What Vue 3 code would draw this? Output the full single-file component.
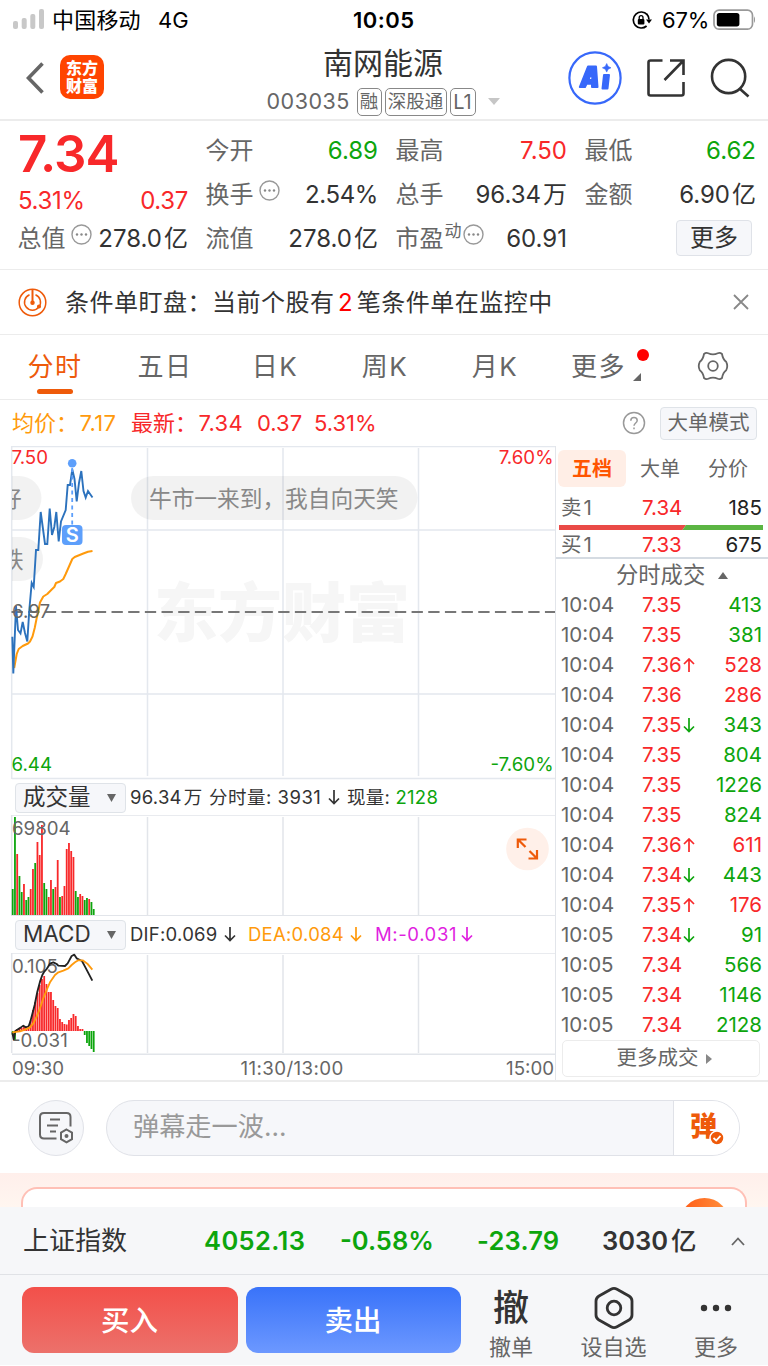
<template>
  <div class="page">
    <div class="status-bar">
      <svg class="signal" width="32" height="20" viewBox="0 0 32 20">
        <rect x="0" y="12" width="5" height="8" rx="2" />
        <rect x="8.7" y="9" width="5" height="11" rx="2" />
        <rect x="17.3" y="5" width="5" height="15" rx="2" />
        <rect x="26" y="0" width="5" height="20" rx="2" />
      </svg>
      <span class="carrier">中国移动</span>
      <span class="net">4G</span>
      <span class="clock">10:05</span>
      <svg class="lock" width="20" height="18" viewBox="0 0 20 18" fill="none" stroke="#000" stroke-width="1.7">
        <path d="M15.2 3.6A8 8 0 1 0 14.6 15" />
        <path d="M14.8 3.2A8 8 0 0 1 17 8.6" />
        <path d="M14 8.4h6l-3 4z" fill="#000" stroke="none" />
        <rect x="5.8" y="8" width="6.6" height="5.4" rx="1" fill="#000" stroke="none" />
        <path d="M7.2 8.4V6.6a1.9 1.9 0 0 1 3.8 0v1.8" stroke-width="1.3" />
      </svg>
      <span class="percent">67%</span>
      <svg class="battery" width="42" height="22" viewBox="0 0 42 22">
        <rect x="1" y="1.2" width="38.5" height="19" rx="5" fill="none" stroke="#999" stroke-width="1.7" />
        <rect x="3.8" y="4" width="22.6" height="13.4" rx="2.6" />
        <path d="M41 7.5c1.2.8 1.6 5.2 0 6.4z" fill="#999" />
      </svg>
    </div>

    <header class="header">
      <svg class="back" width="18" height="32" viewBox="0 0 18 32"><path d="M16.5 1.5L2.5 16L16.5 30.5" fill="none" stroke="#666" stroke-width="3.6" /></svg>
      <div class="logo"><span>东方</span><span>财富</span></div>
      <div class="title">
        <h1>南网能源</h1>
        <div class="code">
          <span class="code-num">003035</span>
          <i class="tag t1">融</i><i class="tag t2">深股通</i><i class="tag t3">L1</i>
          <svg width="12" height="7" viewBox="0 0 12 7"><path d="M0 0h12L6 7z" fill="#c6c6c6" /></svg>
        </div>
      </div>
      <div class="header-icons">
        <svg width="54" height="54" viewBox="0 0 54 54">
          <circle cx="27" cy="27" r="25.6" fill="none" stroke="#3768fa" stroke-width="2.2" />
          <path d="M11.8 36L20 15.5H28L29.5 36H24V32.8H18.500L17 36Z M20.3 29H24.3L24 20.500Z" fill="#3768fa" fill-rule="evenodd" stroke="#3768fa" stroke-width="2" stroke-linejoin="round" />
          <path d="M36 24H41L39.500 37.500H34.500Z" fill="#3768fa" stroke="#3768fa" stroke-width="2" stroke-linejoin="round" />
          <path d="M38.700 12.500l1.400 2.900 2.900 1.400-2.900 1.400-1.400 2.900-1.400-2.900-2.900-1.400 2.900-1.400z" fill="#3768fa" stroke="#3768fa" stroke-width=".6" />
        </svg>
        <svg class="share" width="40" height="40" viewBox="0 0 40 40" fill="none" stroke="#333" stroke-width="2.6">
          <path d="M16.500 2.500H4.500Q2.500 2.500 2.500 4.500V35.500Q2.500 37.500 4.500 37.500H35.500Q37.500 37.500 37.500 35.500V24" />
          <path d="M24 2.500H37.500V17M37.500 2.500L18.500 22" />
        </svg>
        <svg class="search" width="40" height="40" viewBox="0 0 40 40" fill="none" stroke="#333" stroke-width="2.6">
          <circle cx="18.600" cy="18.500" r="16.600" /><path d="M29.500 30.500L38.500 38.500" />
        </svg>
      </div>
    </header>

    <section class="quote">
      <div class="col">
        <div class="big red">7.34</div>
        <div class="cell change red"><span class="tight-num">5.31%</span><span class="tight-num">0.37</span></div>
        <div class="cell"><label>总值</label><more-dot /><b>278.0<em>亿</em></b></div>
      </div>
      <div class="col">
        <div class="cell"><label>今开</label><b class="green">6.89</b></div>
        <div class="cell"><label>换手</label><more-dot /><b class="tight-num">2.54%</b></div>
        <div class="cell"><label>流值</label><b>278.0<em>亿</em></b></div>
      </div>
      <div class="col">
        <div class="cell"><label>最高</label><b class="red">7.50</b></div>
        <div class="cell"><label>总手</label><b>96.34<em>万</em></b></div>
        <div class="cell"><label>市盈</label><sup>动</sup><more-dot class="tight" /><b>60.91</b></div>
      </div>
      <div class="col">
        <div class="cell"><label>最低</label><b class="green">6.62</b></div>
        <div class="cell"><label>金额</label><b>6.90<em>亿</em></b></div>
        <div class="cell"><button class="more-btn">更多</button></div>
      </div>
    </section>

    <div class="notice">
      <svg width="29" height="29" viewBox="0 0 29 29" fill="none" stroke="#ee5a0a" stroke-width="1.500">
        <circle cx="14.500" cy="14.500" r="13.300" />
        <path d="M11.500 6.800A8 8 0 1 0 17.500 6.800" />
        <path d="M14.500 1.500V14" stroke-width="2" /><circle cx="14.500" cy="14.800" r="1.500" fill="#ee5a0a" />
        <circle cx="21" cy="18.500" r="1.300" fill="#ee5a0a" />
      </svg>
      <p>条件单盯盘：当前个股有<b>2</b>笔条件单在监控中</p>
      <svg class="close" width="16" height="16" viewBox="0 0 16 16"><path d="M1 1L15 15M15 1L1 15" stroke="#888" stroke-width="1.800" /></svg>
    </div>

    <nav class="tabs">
      <span v-for="t in tabs" :key="t" :class="{ active: t === '分时' }">{{ t }}</span>
      <span class="tab-more">更多<i class="dot"></i>
        <svg width="8" height="8" viewBox="0 0 8 8"><path d="M8 0V8H0z" fill="#666" /></svg>
      </span>
      <svg class="gear" width="32" height="30" viewBox="-16 -15 32 30" fill="none" stroke="#666" stroke-width="1.800">
        <path d="M-9 -12Q-7 -13.800 -4.800 -12.800Q0 -10.600 4.800 -12.800Q7 -13.800 9 -12Q10 -6.300 13.200 -4.200Q15.300 0 13.200 4.200Q10 6.300 9 12Q7 13.800 4.800 12.800Q0 10.600 -4.800 12.800Q-7 13.800 -9 12Q-10 6.300 -13.200 4.200Q-15.300 0 -13.200 -4.200Q-10 -6.300 -9 -12Z" stroke-linejoin="round" />
        <circle r="4.800" />
      </svg>
    </nav>

    <div class="info-line">
      <span class="orange avg">均价：<u>7.17</u></span>
      <span class="red latest">最新：<u>7.34</u></span>
      <span class="red n1">0.37</span>
      <span class="red n2">5.31%</span>
      <svg class="help" width="24" height="24" viewBox="0 0 24 24" fill="none" stroke="#999" stroke-width="1.500">
        <circle cx="12" cy="12" r="10.500" />
        <path d="M8.800 9.700C8.800 5.400 15.200 5.600 15.200 9.500C15.200 12 12 12 12 14.800" /><path d="M12 16.500V18.300" />
      </svg>
      <button class="mode-btn">大单模式</button>
    </div>

    <main class="market">
      <div class="charts">
        <svg class="price-chart" width="555" height="334" viewBox="0 446 555 334">
          <text x="154" y="636" class="watermark">东方财富</text>
          <g stroke="#e4e8ee" stroke-width="1.500" fill="none">
            <path d="M12 446.500H555M11.700 446V779M12 530H555M12 694H555M12 778.500H555" />
            <path d="M147.500 448V776M283 448V776M418.500 448V776" />
          </g>
          <clipPath id="plot"><rect x="12" y="446" width="543" height="334" /></clipPath>
          <g clip-path="url(#plot)" class="bullets">
            <rect x="131" y="476" width="286.500" height="44" rx="22" />
            <text x="149" y="507">牛市一来到，我自向天笑</text>
            <rect x="-40" y="476" width="81.500" height="44" rx="22" />
            <text x="-1" y="507">好</text>
            <rect x="-40" y="537" width="83" height="44" rx="22" />
            <text x="1" y="568">跌</text>
          </g>
          <path d="M11.500 612H555" stroke="#777" stroke-width="2" stroke-dasharray="11.300 5.370" />
          <polyline :points="avgLine" fill="none" stroke="#ff9a0c" stroke-width="2" stroke-linejoin="round" />
          <polyline :points="priceLine" fill="none" stroke="#2c72bd" stroke-width="1.900" />
          <path d="M72.200 468V525" stroke="#5d9ffb" stroke-width="1.800" stroke-dasharray="4 3.500" />
          <circle cx="72.200" cy="463.300" r="4.300" fill="#5d9ffb" />
          <rect x="62" y="525" width="20.500" height="20" rx="4" fill="#5d9ffb" />
          <text x="72.200" y="542" class="s-mark">S</text>
          <g class="axis">
            <text x="11.500" y="464" fill="#f8282a">7.50</text>
            <text x="553.500" y="464" fill="#f8282a" text-anchor="end">7.60%</text>
            <text x="12" y="618" fill="#666">6.97</text>
            <text x="11.500" y="771" fill="#0da50d">6.44</text>
            <text x="553.500" y="771" fill="#0da50d" text-anchor="end">-7.60%</text>
          </g>
        </svg>

        <div class="indicator">
          <span class="select">成交量<svg width="9" height="8" viewBox="0 0 9 8"><path d="M0 0h9L4.500 8z" fill="#666" /></svg></span>
          <span class="v1">96.34<em>万</em></span>
          <span class="v2">分时量: 3931</span>
          <arrow-icon dir="down" class="a1" />
          <span class="v3">现量: <b class="green">2128</b></span>
        </div>

        <svg class="sub-chart" width="555" height="101" viewBox="0 815 555 101">
          <g class="grid">
            <path d="M12 815H555M11.700 815V916M12 915.800H555" />
            <path d="M147.500 817V915M283 817V915M418.500 817V915" />
          </g>
          <rect v-for="(v, i) in volumes" :key="i" :x="11.800 + i * 2.250" :y="915 - Math.abs(v)" width="1.800" :height="Math.abs(v)" :fill="v > 0 ? '#f8282a' : '#0da50d'" />
          <text x="12" y="835" class="axis" fill="#666">69804</text>
          <circle cx="527.500" cy="849" r="21.300" fill="#fff0e9" />
          <path d="M517.800 848V839.500H526.500M518 839.500L525.500 847M537 850V858.500H528.500M537 858.500L529.500 851" fill="none" stroke="#ee5a0a" stroke-width="2.200" />
        </svg>

        <div class="indicator macd">
          <span class="select">MACD<svg width="9" height="8" viewBox="0 0 9 8"><path d="M0 0h9L4.500 8z" fill="#666" /></svg></span>
          <span class="m1">DIF:0.069</span><arrow-icon dir="down" />
          <span class="m2 orange">DEA:0.084</span><arrow-icon dir="down" class="orange" />
          <span class="m3 purple">M:-0.031</span><arrow-icon dir="down" class="purple" />
        </div>

        <svg class="sub-chart" width="555" height="102" viewBox="0 953 555 102">
          <g class="grid">
            <path d="M12 953H555M11.700 953V1053" />
            <path d="M12 1054.500H555" stroke-width="1.800" />
            <path d="M147.500 955V1053M283 955V1053M418.500 955V1053" />
          </g>
          <rect v-for="(v, i) in macdBars" :key="i" :x="11.800 + i * 2.250" :y="v > 0 ? 1031 - v : 1031" width="1.800" :height="Math.abs(v)" :fill="v > 0 ? '#f8282a' : '#0da50d'" />
          <g class="axis" fill="#666">
            <text x="12" y="973">0.105</text>
            <text x="12" y="1047">-0.031</text>
          </g>
          <g transform="translate(0 775) scale(.3333)" fill="none" stroke-width="5.500" stroke-linejoin="round">
            <polyline :points="difLine" stroke="#222" />
            <polyline :points="deaLine" stroke="#ff9a0c" />
          </g>
        </svg>

        <div class="times"><span>09:30</span><span class="mid">11:30/13:00</span><span>15:00</span></div>
      </div>

      <aside class="side">
        <div class="side-tabs"><span class="on">五档</span><span>大单</span><span>分价</span></div>
        <div class="level"><label>卖<i>1</i></label><span class="red">7.34</span><b>185</b></div>
        <svg class="ratio" width="204" height="5" viewBox="0 0 204 5">
          <path d="M0 0H127L123.500 5H0z" fill="#ea4a47" /><path d="M127 0H204V5H123.500z" fill="#5bb543" />
        </svg>
        <div class="level buy"><label>买<i>1</i></label><span class="red">7.33</span><b>675</b></div>
        <div class="deal-title">分时成交<svg width="10" height="7" viewBox="0 0 10 7"><path d="M0 7h10L5 0z" fill="#666" /></svg></div>
        <div v-for="(d, i) in deals" :key="i" class="deal">
          <span class="time">{{ d[0] }}</span>
          <span class="red price">{{ d[1] }}</span>
          <arrow-icon v-if="d[3]" :dir="d[3]" :class="d[3] === 'up' ? 'red' : 'green'" />
          <span class="vol" :class="d[4]">{{ d[2] }}</span>
        </div>
        <button class="deal-more">更多成交<svg width="6" height="10" viewBox="0 0 6 10"><path d="M0 0v10L6 5z" fill="#888" /></svg></button>
      </aside>
    </main>

    <div class="danmu">
      <div class="danmu-set">
        <svg width="36" height="34" viewBox="0 0 36 34" fill="none" stroke="#666" stroke-width="2">
          <path d="M18.500 27.500H6Q2 27.500 2 23.500V6Q2 2 6 2H28.500Q32.500 2 32.500 6V15.500" />
          <path d="M12 8.500H22M9 14.500H20M12 20.500H18" />
          <path d="M28.500 18.500L34 21.700V28.100L28.500 31.300L23 28.100V21.700Z" /><circle cx="28.500" cy="24.900" r="1" fill="#666" />
        </svg>
      </div>
      <div class="danmu-input">
        <span>弹幕走一波...</span>
        <div class="danmu-toggle">
          <span>弹</span>
          <svg width="16" height="16" viewBox="0 0 16 16"><circle cx="8" cy="8" r="7" fill="#ee5a0a" stroke="#fff" stroke-width="1.500" /><path d="M4.500 8L7.200 10.500L11.500 5.800" fill="none" stroke="#fff" stroke-width="1.800" /></svg>
        </div>
      </div>
    </div>

    <div class="promo"><div class="promo-card"><i></i></div></div>

    <div class="index-bar">
      <span class="name">上证指数</span>
      <b class="green i1">4052.13</b>
      <b class="green i2">-0.58%</b>
      <b class="green i3">-23.79</b>
      <b class="i4">3030<em>亿</em></b>
      <svg width="14" height="9" viewBox="0 0 14 9"><path d="M1 8L7 1.500L13 8" fill="none" stroke="#666" stroke-width="1.800" /></svg>
    </div>

    <footer class="actions">
      <button class="trade buy-btn">买入</button>
      <button class="trade sell-btn">卖出</button>
      <div class="act"><span class="act-icon che">撤</span><span>撤单</span></div>
      <div class="act wide">
        <svg class="act-icon" width="42" height="44" viewBox="0 0 42 44" fill="none" stroke="#333" stroke-width="2.800">
          <path d="M18 3.200Q21 1.500 24 3.200L36 10Q39 11.800 39 15V29Q39 32.200 36 34L24 40.800Q21 42.500 18 40.800L6 34Q3 32.200 3 29V15Q3 11.800 6 10Z" />
          <circle cx="21" cy="22" r="6.800" />
        </svg>
        <span>设自选</span>
      </div>
      <div class="act">
        <svg class="act-icon" width="32" height="44" viewBox="0 0 32 44" fill="#333"><circle cx="4" cy="22" r="3.200" /><circle cx="16" cy="22" r="3.200" /><circle cx="28" cy="22" r="3.200" /></svg>
        <span>更多</span>
      </div>
    </footer>
  </div>
</template>

<script setup>
import { h } from 'vue'

// кружок с тремя точками рядом с подписью
const MoreDot = () => h('svg', { class: 'more-dot', width: 21, height: 21, viewBox: '0 0 21 21' }, [
  h('circle', { cx: 10.5, cy: 10.5, r: 9.5, fill: 'none', stroke: '#999', 'stroke-width': 1.4 }),
  ...[6, 10.5, 15].map(x => h('circle', { cx: x, cy: 10.5, r: 1.2, fill: '#888' }))
])

// стрелка вверх / вниз
const ArrowIcon = (props) => h('svg', { width: 12, height: 15, viewBox: '0 0 12 15' }, [
  h('path', {
    d: props.dir === 'up' ? 'M6 14V1M1 6L6 1L11 6' : 'M6 0V13.500M1 8.500L6 13.500L11 8.500',
    fill: 'none',
    stroke: 'currentColor',
    'stroke-width': 1.7
  })
])
ArrowIcon.props = ['dir']

const tabs = ['分时', '五日', '日K', '周K', '月K']

const priceLine = '12.3,636.7 13.3,673.5 16,606 18,630 20.5,633.5 22.7,622 25,633 27.3,641.5 29.3,610 31.7,583 33.7,587 36,550 38.3,550 40.7,512 45,544 47.3,544 49.7,508.5 52,535 54.3,527 56.3,512 58.7,541.5 61,521.5 65.7,510 67.7,485 70,485 72.3,469.5 74.5,479 76.7,501.5 79,483 81.3,471 83.5,491 85.7,497.5 88,491 92.5,497.5'
const avgLine = '14.2,668 16.7,654 18.7,649 22.7,646 28,643.5 30,641.5 32.5,636.5 34.7,628 36.7,618 38.3,611.5 40,602.5 43.3,596.5 47.3,594 51.7,589.5 54.3,587 56,583 60,581.5 63.3,579 65.7,574 72.3,559 74.7,557 83.3,553.5 88,551.7 92.5,551'

// положительные - красные, отрицательные - зелёные
const volumes = [-26, -98, 61, -39, -23, 31, -15, -18, 26, 46, -52, 73, 60, 90, -32, -26, 18, 35, -26, 28, 55, -18, 19, 29, 66, 72, 64, 58, -24, -18, 21, 19, -15, -17, 16, -13, -6]
const macdBars = [-4, -10, 2, 3, 3, 5, 4, 4, 11, 21, 29, 38, 46, 52, 55, 47, 39, 39, 31, 25, 23, 12, 9, 7, 6.5, 11, 13, 17, 15, 5, 2, 2, -4, -12, -15, -18, -21]
const difLine = '37,772 41,793 46,768 62,758 70,752 77,757 86,754 91,740 104,690 112,650 120,620 127,600 133,590 140,582 150,566 160,562 170,567 175,572 195,573 203,565 215,543 223,539 230,550 240,555 246,558 255,575 277,617'
const deaLine = '37,772 60,769 75,764 90,757 100,745 110,725 120,700 130,670 140,645 150,622 165,600 175,592 190,587 205,580 215,570 225,562 235,556 248,556 262,566 277,584'

const deals = [
  ['10:04', '7.35', 413, '', 'green'],
  ['10:04', '7.35', 381, '', 'green'],
  ['10:04', '7.36', 528, 'up', 'red'],
  ['10:04', '7.36', 286, '', 'red'],
  ['10:04', '7.35', 343, 'down', 'green'],
  ['10:04', '7.35', 804, '', 'green'],
  ['10:04', '7.35', 1226, '', 'green'],
  ['10:04', '7.35', 824, '', 'green'],
  ['10:04', '7.36', 611, 'up', 'red'],
  ['10:04', '7.34', 443, 'down', 'green'],
  ['10:04', '7.35', 176, 'up', 'red'],
  ['10:05', '7.34', 91, 'down', 'green'],
  ['10:05', '7.34', 566, '', 'green'],
  ['10:05', '7.34', 1146, '', 'green'],
  ['10:05', '7.34', 2128, '', 'green']
]
</script>

<style>
body {
  margin: 0;
  background: #fff;
}
</style>

<style scoped>
.page {
  width: 768px;
  height: 1366px;
  overflow: hidden;
  background: #fff;
  color: #333;
  font-family: Inter, 'Noto Sans CJK SC', sans-serif;
  font-size: 24px;
  line-height: 1;
  white-space: nowrap;
}

.page * {
  box-sizing: border-box;
}

svg {
  display: block;
  flex-shrink: 0;
}

b, i, em, u {
  font-style: normal;
  font-weight: inherit;
  text-decoration: none;
}

button {
  padding: 0;
  font-family: inherit;
  line-height: 1;
}

.red { color: #f8282a; }
.green { color: #0da50d; }
.orange { color: #ff9a0c; }
.purple { color: #e01fe0; }

/* строка состояния */
.status-bar {
  display: flex;
  align-items: center;
  height: 40px;
  padding-left: 13px;
  font-size: 22px;
  color: #000;
}
.signal { fill: #c8c8c8; margin-top: -3px; }
.carrier { margin-left: 7px; width: 106px; letter-spacing: 0.2px; }
.net { width: 195px; }
.clock { width: 279px; font-weight: 600; letter-spacing: 0.5px; }
.percent { margin-left: 10px; width: 51px; letter-spacing: -0.2px; }
.battery { margin-top: -1px; }

/* шапка */
.header {
  display: flex;
  align-items: center;
  height: 81px;
  padding-left: 26px;
  border-bottom: 2px solid #ececec;
}
.back { margin-top: -4px; }
.logo {
  display: flex;
  flex-direction: column;
  align-items: center;
  justify-content: center;
  gap: 2px;
  width: 44px;
  height: 44px;
  margin: -5px 0 0 16px;
  border-radius: 10px;
  background: #ff4400;
  color: #fff;
  font-size: 16px;
  font-weight: 900;
}
.title {
  display: flex;
  flex-direction: column;
  align-items: center;
  width: 240px;
  margin: 4px 0 0 159px;
}
h1 {
  margin: 0 0 10px;
  font-size: 30px;
  font-weight: 400;
}
.code { display: flex; align-items: center; height: 28px; color: #666; }
.code-num { width: 90px; font-size: 21.5px; letter-spacing: 0.5px; }
.tag {
  display: flex;
  align-items: center;
  justify-content: center;
  height: 28px;
  margin-right: 3px;
  border: 1.5px solid #888;
  border-radius: 5px;
  font-size: 18.5px;
}
.t1 { width: 25px; }
.t2 { width: 62px; }
.t3 { width: 26px; font-size: 20px; margin-right: 12px; }
.header-icons { display: flex; align-items: center; margin: -4px 0 0 65px; }
.share { margin-left: 24px; }
.search { margin-left: 24px; }

/* котировки */
.quote {
  display: grid;
  grid-template-columns: 170px 172px 171px 171px;
  column-gap: 18px;
  height: 149px;
  padding: 8px 0 0 18px;
  border-bottom: 1px solid #ececec;
}
.cell { display: flex; align-items: center; height: 44px; }
.cell b { margin-left: auto; }
.cell em { margin-left: 2px; }
.cell label, .cell sup { color: #666; }
.cell label { margin-left: -0.5px; }
.cell sup { font-size: 17px; margin-top: -15px; margin-left: 1px; }
.tight-num { letter-spacing: -0.35px; }
.big { height: 50px; line-height: 49px; font-size: 51px; font-weight: 600; letter-spacing: -1px; }
.change { justify-content: space-between; height: 44px; }
.col:first-child .cell:last-child { height: 32px; }
.more-dot { margin: -9px 0 0 5px; }
.more-dot.tight { margin-left: 1px; }
.more-btn {
  width: 76px;
  height: 36px;
  margin: -2px 4px 0 auto;
  border: 1px solid #dfe2e8;
  border-radius: 4px;
  background: #f6f7fa;
  color: #333;
  font-size: 24px;
}

/* уведомление */
.notice {
  display: flex;
  align-items: center;
  height: 65px;
  padding: 0 19px 0 18px;
  border-bottom: 1px solid #ececec;
}
.notice p { margin: 1px 0 0 18px; letter-spacing: 0.5px; }
.notice b { margin: 0 4px 0 3.5px; color: #f00; letter-spacing: 0; }
.close { margin-left: auto; }

/* вкладки периода */
.tabs {
  display: flex;
  height: 65px;
  border-bottom: 1px solid #ececec;
  font-size: 26px;
  line-height: 64px;
  letter-spacing: 1.4px;
  color: #666;
}
.tabs span { position: relative; width: 110px; text-align: center; }
.tabs .active { color: #ee5a0a; }
.tabs .active::after {
  content: '';
  position: absolute;
  left: 37px;
  top: 54px;
  width: 36px;
  height: 5px;
  border-radius: 3px;
  background: #ee5a0a;
}
.tabs .tab-more { width: 147px; padding-left: 21px; text-align: left; }
.tab-more .dot {
  position: absolute;
  left: 87px;
  top: 14px;
  width: 12px;
  height: 12px;
  border-radius: 50%;
  background: #f00;
}
.tab-more svg { position: absolute; left: 83px; top: 38px; }
.gear { margin-top: 16px; }

.info-line {
  display: flex;
  align-items: center;
  height: 46px;
  padding-left: 12px;
  font-size: 22px;
}
.avg { width: 119px; }
.latest { width: 126px; }
.avg u, .latest u { margin-left: 1.5px; letter-spacing: 0.3px; }
.n1 { width: 57px; }
.n2 { width: 308px; }
.mode-btn {
  width: 97px;
  height: 33px;
  margin-left: 14px;
  border: 1.5px solid #dfe3e8;
  border-radius: 4px;
  background: #f6f7fa;
  color: #666;
  font-size: 20.5px;
}

/* графики */
.market { display: flex; height: 636px; border-bottom: 2px solid #ececec; }
.charts { width: 555px; }
.watermark { font-size: 64px; font-weight: 900; fill: #f6f6f6; }
.bullets rect { fill: rgba(0, 0, 0, 0.05); }
.bullets text { font-size: 22.7px; fill: #888; }
.s-mark { font-size: 20px; font-weight: 600; fill: #fff; text-anchor: middle; }
.axis { font-size: 18.7px; }
.grid { stroke: #e2e5ea; stroke-width: 1.5; fill: none; }
.indicator {
  display: flex;
  align-items: center;
  height: 35px;
  padding-left: 15px;
  font-size: 18.5px;
  letter-spacing: 0.25px;
}
.macd { height: 37px; }
.select {
  display: flex;
  align-items: center;
  justify-content: space-between;
  width: 111px;
  height: 30px;
  margin-right: 4px;
  padding: 0 9px 0 7px;
  border: 1.5px solid #dfe3e8;
  border-radius: 4px;
  background: #f6f7fa;
  font-size: 22.5px;
  letter-spacing: 0;
}
.v1 { width: 79px; }
.v1 em { margin-left: 2px; }
.v2 { width: 119px; letter-spacing: 0.5px; }
.v3 { margin-left: 7px; }
.m1 { width: 94px; }
.m2 { width: 102px; margin-left: 12px; }
.m3 { width: 86px; margin-left: 13px; letter-spacing: 0.6px; }
.times {
  display: flex;
  justify-content: space-between;
  padding: 5px 1px 0 12px;
  color: #666;
  font-size: 18.7px;
}
.times .mid { margin-left: 14px; letter-spacing: 0.4px; }

/* стакан и сделки */
.side { width: 213px; border-left: 1.5px solid #e2e5ea; }
.side-tabs {
  display: flex;
  height: 37px;
  margin: 4px 0 0 2px;
  color: #666;
  font-size: 20px;
  line-height: 38px;
}
.side-tabs span { width: 68px; text-align: center; }
.side-tabs .on { border-radius: 6px; background: #ffeee6; color: #ff5500; font-weight: 700; }
.level {
  display: flex;
  align-items: center;
  height: 38px;
  padding: 5px 6px 0 5px;
  font-size: 20.5px;
}
.level label { width: 81px; color: #666; }
.level i { margin-left: 2px; }
.level b { margin-left: auto; color: #222; }
.ratio { margin-left: 3px; }
.level.buy { height: 29px; padding-top: 4px; border-bottom: 2px solid #d5dbe2; }
.deal-title {
  display: flex;
  align-items: center;
  gap: 13px;
  height: 31px;
  padding: 2px 0 0 60px;
  color: #666;
  font-size: 22.3px;
}
.deal {
  display: flex;
  align-items: center;
  height: 30px;
  padding: 0 6px 0 5px;
  font-size: 20.5px;
}
.time { width: 81px; color: #666; }
.price { width: 41px; }
.vol { margin-left: auto; }
.deal-more {
  display: flex;
  align-items: center;
  justify-content: center;
  gap: 7px;
  width: 198px;
  height: 37px;
  margin-left: 6px;
  padding-left: 6px;
  border: 1.5px solid #ececec;
  border-radius: 5px;
  background: #fff;
  color: #666;
  font-size: 20.5px;
}

/* ввод комментария */
.danmu { display: flex; align-items: center; height: 91px; padding-left: 28px; }
.danmu-set {
  display: flex;
  align-items: center;
  justify-content: center;
  width: 56px;
  height: 56px;
  border: 1.5px solid #e0e2e8;
  border-radius: 50%;
  background: #f6f7fa;
}
.danmu-input {
  display: flex;
  align-items: center;
  justify-content: space-between;
  width: 634px;
  height: 56px;
  margin-left: 22px;
  padding-left: 26px;
  overflow: hidden;
  border: 1.5px solid #e0e2e8;
  border-radius: 28px;
  background: #f6f7fa;
  color: #999;
  font-size: 26.2px;
}
.danmu-toggle {
  position: relative;
  width: 66px;
  height: 100%;
  padding: 12px 0 0 16px;
  border-left: 1.5px solid #e0e2e8;
  background: #fff;
  color: #ee5a0a;
  font-size: 27px;
  font-weight: 900;
}
.danmu-toggle svg { position: absolute; left: 35px; top: 29px; }

.promo { height: 34px; padding: 14px 21px 0; background: linear-gradient(#ffefeb, #fff6f0); }
.promo-card {
  position: relative;
  height: 20px;
  overflow: hidden;
  border: 2px solid #ffc0b6;
  border-bottom: 0;
  border-radius: 16px 16px 0 0;
  background: #fff;
}
.promo-card i {
  position: absolute;
  right: 16px;
  top: 9px;
  width: 49px;
  height: 49px;
  border-radius: 50%;
  background: linear-gradient(90deg, #ff5a14, #ff9340);
}

/* индекс */
.index-bar {
  display: flex;
  align-items: center;
  height: 68px;
  padding: 1px 0 0 23px;
  border-bottom: 1.5px solid #e0e2e6;
  background: #f6f7f9;
  font-size: 25.5px;
}
.index-bar b { font-weight: 600; }
.index-bar em { margin-left: 3px; font-weight: 500; }
.name { width: 181px; font-size: 26px; }
.i1 { width: 136px; letter-spacing: 0.4px; }
.i2 { width: 137px; }
.i3 { width: 125px; letter-spacing: 0.2px; }
.i4 { width: 129px; }

/* нижняя панель */
.actions { display: flex; height: 90px; padding: 12px 0 0 22px; background: #f6f7f9; }
.trade {
  width: 216px;
  height: 66px;
  margin-right: 8px;
  padding: 2px 1px 0 0;
  border: 0;
  border-radius: 12px;
  color: #fff;
  font-size: 28.5px;
  font-weight: 500;
}
.buy-btn { background: linear-gradient(#f3504a, #ec716b); }
.sell-btn { width: 215px; background: linear-gradient(#3973f9, #6c98ff); }
.act {
  display: flex;
  flex-direction: column;
  align-items: center;
  width: 84px;
  color: #666;
  font-size: 22px;
}
.act.wide { width: 121px; }
.act-icon { height: 44px; margin: -1px 0 6px; }
.che { font-size: 36px; font-weight: 500; line-height: 45px; color: #333; }
</style>
